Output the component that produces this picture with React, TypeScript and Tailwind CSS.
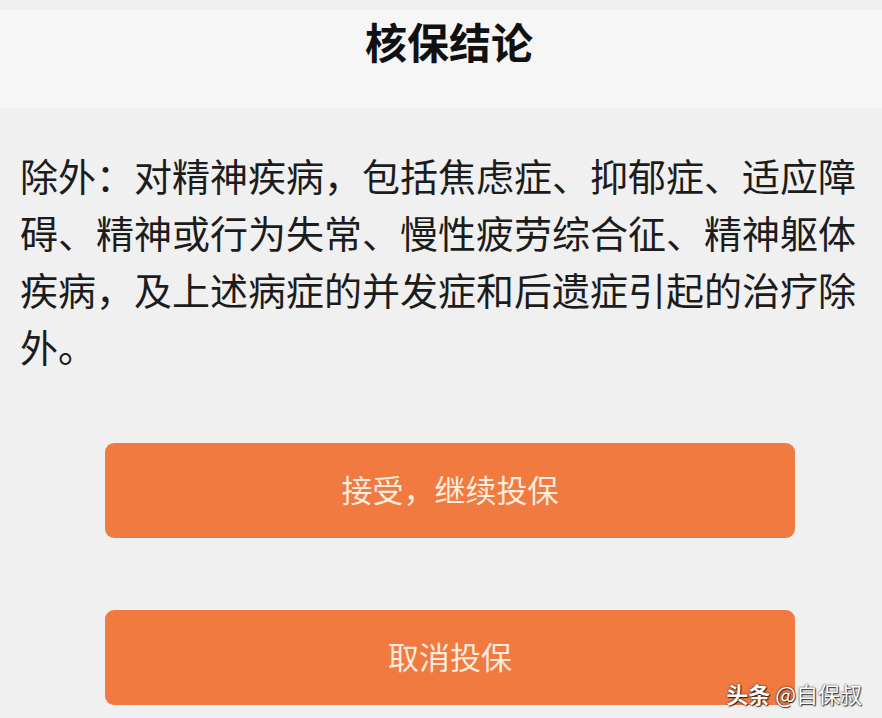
export default function App() {
  return (
    <div
      className="relative w-[882px] h-[718px] overflow-hidden bg-[#f0f0f0]"
      style={{ fontFamily: '"Noto Sans CJK SC", "Noto Sans", sans-serif' }}
    >
      {/* 顶部标题栏 */}
      <div className="h-[108px] bg-[#f6f6f6] border-t-[10px] border-[#efefef] flex justify-center pl-[16px]">
        <h1 className="mt-[5px] text-[42px] leading-[52px] font-bold text-[#111]">核保结论</h1>
      </div>

      {/* 核保说明 */}
      <p className="mt-[38px] px-[20px] text-[38px] leading-[57px] text-[#1c1c1c]">
        除外：对精神疾病，包括焦虑症、抑郁症、适应障碍、精神或行为失常、慢性疲劳综合征、精神躯体疾病，及上述病症的并发症和后遗症引起的治疗除外。
      </p>

      {/* 操作按钮 */}
      <div className="mt-[69px] ml-[105px] w-[690px] flex flex-col gap-[72px]">
        <button className="h-[95px] rounded-[9px] bg-[#f07a40] text-[#fdebdd] text-[31px] pb-[2px]">
          接受，继续投保
        </button>
        <button className="h-[95px] rounded-[9px] bg-[#f07a40] text-[#fdebdd] text-[31px] pb-[2px]">
          取消投保
        </button>
      </div>

      {/* 水印 */}
      <div className="absolute right-[20px] bottom-[14px] flex items-center gap-[5px] text-[22px] leading-none text-white [text-shadow:0_0_2px_rgba(0,0,0,0.9),1px_1px_1px_rgba(0,0,0,0.7)]">
        <span className="font-bold">头条</span>
        <span>@自保叔</span>
      </div>
    </div>
  );
}
